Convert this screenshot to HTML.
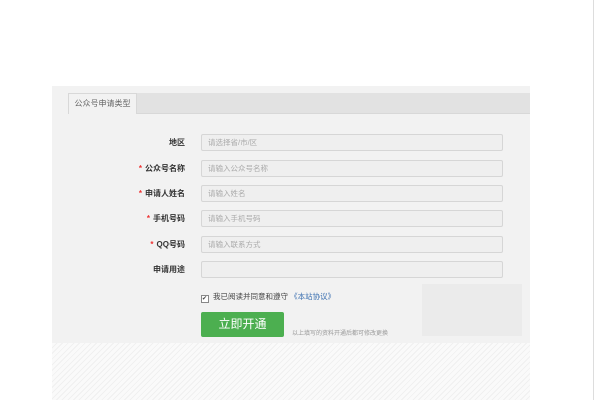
<!DOCTYPE html>
<html><head><meta charset="utf-8"><style>
body{margin:0;width:600px;height:400px;background:#fff;position:relative;overflow:hidden;font-family:"Liberation Sans","Noto Sans CJK SC",sans-serif;}
.panel{position:absolute;left:52px;top:86px;width:478px;height:257px;background:#f2f2f2;}
.tabbar{position:absolute;left:16px;top:7px;right:0;height:20px;background:#e2e2e2;border-bottom:1px solid #d8d8d8;}
.tab{position:absolute;left:16px;top:7px;width:69px;height:21px;background:#f2f2f2;border:1px solid #d8d8d8;border-bottom:none;box-sizing:border-box;font-size:8px;color:#666;line-height:20px;text-align:center;}
.lbl{position:absolute;right:345px;font-size:8px;font-weight:bold;color:#333;line-height:17px;}
.lbl i{color:#e33;font-style:normal;margin-right:3px;}
.inp{position:absolute;left:149px;width:302px;height:17px;border:1px solid #d6d6d6;border-radius:2px;background:#efefef;box-sizing:border-box;font-size:7.5px;color:#aaa;line-height:15px;padding-left:6px;}
.btn{position:absolute;left:149px;top:226px;width:83px;height:25px;background:#4caf50;border-radius:2px;color:#fff;font-size:12px;text-align:center;line-height:25px;}
.stripe{position:absolute;left:52px;top:343px;width:478px;height:57px;background:repeating-linear-gradient(135deg,#fafafa 0 3px,#f0f0f0 3px 4px);}
</style></head><body>
<div class="panel">
<div class="tabbar"></div><div class="tab">公众号申请类型</div>
<div class="lbl" style="top:48px">地区</div><div class="inp" style="top:48px">请选择省/市/区</div>
<div class="lbl" style="top:74px"><i>*</i>公众号名称</div><div class="inp" style="top:74px">请输入公众号名称</div>
<div class="lbl" style="top:99px"><i>*</i>申请人姓名</div><div class="inp" style="top:99px">请输入姓名</div>
<div class="lbl" style="top:124px"><i>*</i>手机号码</div><div class="inp" style="top:124px">请输入手机号码</div>
<div class="lbl" style="top:150px"><i>*</i>QQ号码</div><div class="inp" style="top:150px">请输入联系方式</div>
<div class="lbl" style="top:175px">申请用途</div><div class="inp" style="top:175px"></div>
<div style="position:absolute;left:149px;top:205px;font-size:7.5px;color:#444;"><span style="display:inline-block;width:6px;height:6px;border:1px solid #888;background:#fff;font-size:6px;line-height:6px;vertical-align:-1px;margin-right:4px;">✔</span>我已阅读并同意和遵守 <span style="color:#3a6fb0">《本站协议》</span></div>
<div style="position:absolute;left:370px;top:198px;width:100px;height:52px;background:#ebebeb;"></div>
<div class="btn">立即开通</div>
<div style="position:absolute;left:240px;top:242px;font-size:6px;color:#999;">以上填写的资料开通后都可修改更换</div>
</div>
<div class="stripe"></div>
<div style="position:absolute;left:593px;top:0;width:1px;height:400px;background:#ddd;"></div>
</body></html>
